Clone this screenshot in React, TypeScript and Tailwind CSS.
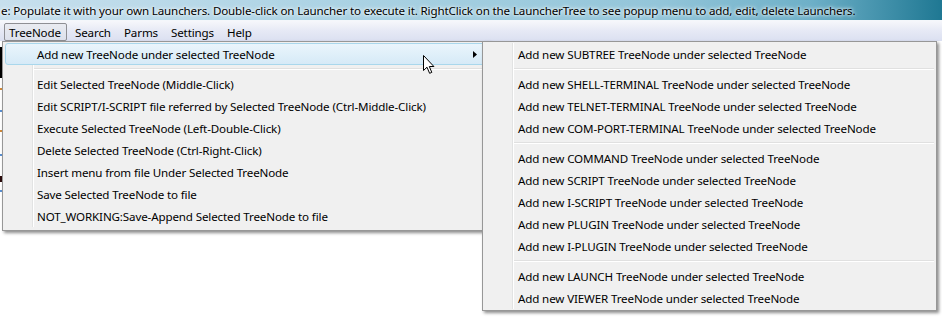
import React from "react"

type Row = { label?: string; sep?: boolean; hl?: boolean; sub?: boolean }

const mainRows: Row[] = [
  { label: "Add new TreeNode under selected TreeNode", hl: true, sub: true },
  { sep: true },
  { label: "Edit Selected TreeNode (Middle-Click)" },
  { label: "Edit SCRIPT/I-SCRIPT file referred by Selected TreeNode (Ctrl-Middle-Click)" },
  { label: "Execute Selected TreeNode (Left-Double-Click)" },
  { label: "Delete Selected TreeNode (Ctrl-Right-Click)" },
  { label: "Insert menu from file Under Selected TreeNode" },
  { label: "Save Selected TreeNode to file" },
  { label: "NOT_WORKING:Save-Append Selected TreeNode to file" },
]

const subRows: Row[] = [
  { label: "Add new SUBTREE TreeNode under selected TreeNode" },
  { sep: true },
  { label: "Add new SHELL-TERMINAL TreeNode under selected TreeNode" },
  { label: "Add new TELNET-TERMINAL TreeNode under selected TreeNode" },
  { label: "Add new COM-PORT-TERMINAL TreeNode under selected TreeNode" },
  { sep: true },
  { label: "Add new COMMAND TreeNode under selected TreeNode" },
  { label: "Add new SCRIPT TreeNode under selected TreeNode" },
  { label: "Add new I-SCRIPT TreeNode under selected TreeNode" },
  { label: "Add new PLUGIN TreeNode under selected TreeNode" },
  { label: "Add new I-PLUGIN TreeNode under selected TreeNode" },
  { sep: true },
  { label: "Add new LAUNCH TreeNode under selected TreeNode" },
  { label: "Add new VIEWER TreeNode under selected TreeNode" },
]

function MenuRow({ row, textPad }: { row: Row; textPad: string }) {
  if (row.sep) {
    return (
      <div className="flex h-[8px]">
        <div className="w-[28px] shrink-0 border-r border-[#e2e3e3] shadow-[1px_0_0_#ffffff]" />
        <div className="flex flex-1 flex-col justify-center pl-[1px]">
          <div className="h-px bg-[#e0e0e0]" />
          <div className="h-px bg-white" />
        </div>
      </div>
    )
  }
  if (row.hl) {
    return (
      <div className="flex h-[22px] items-center rounded-[3px] border border-[#a9d7ec] bg-gradient-to-b from-[#eaf5fc] to-[#d6eaf7] pl-[31px] pr-[9px]">
        <span className="flex-1 whitespace-nowrap pt-[1px]">{row.label}</span>
        {row.sub && (
          <svg width="4" height="7" viewBox="0 0 4 7">
            <polygon points="0,0 4,3.5 0,7" fill="#000" />
          </svg>
        )}
      </div>
    )
  }
  return (
    <div className="flex h-[22px]">
      <div className="w-[28px] shrink-0 border-r border-[#e2e3e3] shadow-[1px_0_0_#ffffff]" />
      <div className={`flex items-center whitespace-nowrap pt-[1px] ${textPad}`}>{row.label}</div>
    </div>
  )
}

export default function App() {
  return (
    <div className="relative h-[320px] w-[942px] overflow-hidden bg-white font-['Noto_Sans',sans-serif] text-[11.6px] leading-none tracking-[-0.14px] text-black">
      {/* title bar */}
      <div className="flex h-[20px] items-center whitespace-nowrap bg-[linear-gradient(to_right,#c7dfed_0%,#acd3e4_35%,#93c5d9_70%,#6eb0c8_86%,#1f7893_100%)] pl-[1px] pt-[1px] [text-shadow:0_0_5px_#ffffff,0_0_3px_#ffffff]">
        e: Populate it with your own Launchers. Double-click on Launcher to execute it. RightClick on the LauncherTree to see popup menu to add, edit, delete Launchers.
      </div>

      {/* menu bar */}
      <div className="flex h-[21px] items-start border-t border-[#f4f7fb] bg-gradient-to-b from-[#f6f7fb] via-[#e6e9f5] to-[#dbe0f1] pl-[4px] pt-[2px]">
        <div className="flex h-[18px] w-[63px] items-center rounded-[2px] border border-[#8e8f94] bg-gradient-to-b from-[#e9ebf1] to-[#dde1ec] pl-[4px] pt-[1px]">
          TreeNode
        </div>
        <div className="ml-[8px] flex h-[18px] w-[49px] items-center pt-[1px]">Search</div>
        <div className="flex h-[18px] w-[47px] items-center pt-[1px]">Parms</div>
        <div className="flex h-[18px] w-[56px] items-center pt-[1px]">Settings</div>
        <div className="flex h-[18px] items-center pt-[1px]">Help</div>
      </div>

      {/* window content peeking on the left */}
      <div className="flex flex-col pt-[6px]">
        <div className="h-[31px] w-[2px] bg-black" />
        <div className="mt-[10px] h-[2px] w-[2px] bg-[#d08a3a]" />
        <div className="mt-[20px] h-[2px] w-[2px] bg-[#5a8fd0]" />
        <div className="mt-[18px] h-[2px] w-[2px] bg-[#d08a3a]" />
        <div className="mt-[22px] h-[2px] w-[2px] bg-[#5a8fd0]" />
        <div className="mt-[20px] h-[6px] w-[2px] bg-[#2a0a0a]" />
        <div className="mt-[8px] h-[2px] w-[2px] bg-[#5a8fd0]" />
      </div>

      {/* main dropdown */}
      <div className="absolute left-[2px] top-[41px] w-[488px] border border-[#979797] bg-[#f0f0f0] px-[2px] pb-[3px] pt-[1px] shadow-[2px_2px_3px_rgba(0,0,0,0.45)]">
        {mainRows.map((r, i) => (
          <MenuRow key={i} row={r} textPad="pl-[4px]" />
        ))}
      </div>

      {/* submenu */}
      <div className="absolute left-[482px] top-[41px] w-[455px] border border-[#979797] bg-[#f0f0f0] px-[2px] pb-[1px] pt-[1px] shadow-[2px_2px_3px_rgba(0,0,0,0.45)]">
        {subRows.map((r, i) => (
          <MenuRow key={i} row={r} textPad="pl-[5px]" />
        ))}
      </div>

      {/* mouse pointer */}
      <svg className="absolute left-[423px] top-[55px]" width="13" height="20" viewBox="0 0 13 20">
        <path
          d="M0.5 0.5 L0.5 15.5 L4 12.2 L6.6 18.3 L8.8 17.4 L6.3 11.5 L10.9 11.5 Z"
          fill="#ffffff"
          stroke="#000000"
          strokeWidth="1"
          strokeLinejoin="miter"
        />
      </svg>
    </div>
  )
}
